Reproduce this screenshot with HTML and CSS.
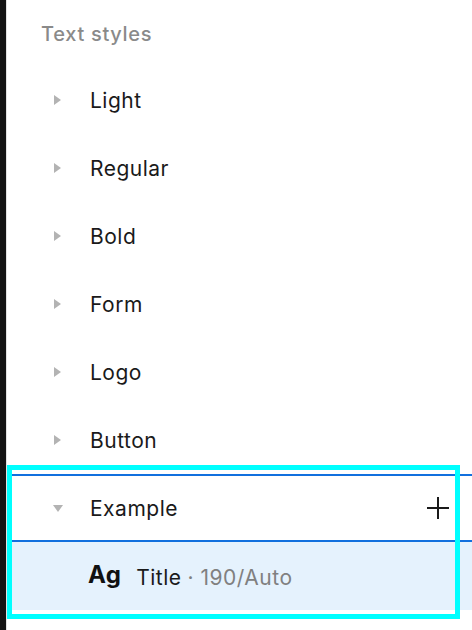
FILE: index.html
```html
<!DOCTYPE html>
<html>
<head>
<meta charset="utf-8">
<link rel="stylesheet" href="styles.css">
</head>
<body>
<div class="app">
  <div class="rail"></div>
  <div class="panel">
    <div class="header">Text styles</div>
    <div class="row"><span class="caret right"></span><span class="name">Light</span></div>
    <div class="row"><span class="caret right"></span><span class="name">Regular</span></div>
    <div class="row"><span class="caret right"></span><span class="name">Bold</span></div>
    <div class="row"><span class="caret right"></span><span class="name">Form</span></div>
    <div class="row"><span class="caret right"></span><span class="name">Logo</span></div>
    <div class="row"><span class="caret right"></span><span class="name">Button</span></div>
    <div class="row group"><span class="caret down"></span><span class="name">Example</span>
      <svg class="plus" width="22" height="22" viewBox="0 0 22 22"><path d="M11 0V22M0 11H22" stroke="#1a1a1a" stroke-width="2"/></svg>
    </div>
    <div class="row style"><span class="ag">Ag</span><span class="sname">Title</span><span class="meta">· 190/Auto</span></div>
    <div class="highlight"></div>
  </div>
</div>
</body>
</html>
```
FILE: styles.css
```css
html, body {
  margin: 0;
  padding: 0;
  background: #fff;
}
body {
  font-family: Inter, "Noto Sans", sans-serif;
  color: #1a1a1a;
}
.app {
  display: flex;
  height: 630px;
  overflow: hidden;
}
.rail {
  width: 6px;
  flex: none;
  background: #131313;
  border-right: 1px solid #e2e2e2;
}
.panel {
  position: relative;
  flex: 1;
}
.header {
  height: 66px;
  box-sizing: border-box;
  padding: 22px 0 0 34px;
  font-size: 20px;
  font-weight: 500;
  letter-spacing: 0.7px;
  color: #8a8a8a;
  line-height: 24px;
}
.row {
  height: 68px;
  box-sizing: border-box;
  display: flex;
  align-items: center;
  padding-left: 47px;
  padding-top: 2px;
  font-size: 21px;
  letter-spacing: 0.5px;
}
.caret {
  width: 0;
  height: 0;
  flex: none;
  margin-top: -2px;
}
.caret.right {
  border-top: 5px solid transparent;
  border-bottom: 5px solid transparent;
  border-left: 7px solid #b3b3b3;
  margin-right: 29px;
}
.caret.down {
  border-left: 5.5px solid transparent;
  border-right: 5.5px solid transparent;
  border-top: 7px solid #b3b3b3;
  margin-left: -1px;
  margin-right: 27px;
}
.name {
  line-height: 24px;
}
.group {
  border-top: 2px solid #1170de;
  border-bottom: 2px solid #1170de;
  padding-right: 23px;
}
.plus {
  margin-left: auto;
  margin-top: -2px;
}
.style {
  background: #e5f2fd;
  padding-left: 81px;
}
.ag {
  font-weight: 700;
  font-size: 24px;
  letter-spacing: 0.3px;
  margin-right: 15px;
  margin-top: -6px;
  color: #111;
}
.sname {
  color: #1a1a1a;
  margin-right: 6px;
}
.meta {
  color: #808080;
}
.highlight {
  position: absolute;
  left: 0;
  top: 465px;
  width: 453px;
  height: 154px;
  box-sizing: border-box;
  border: 5px solid #00ffff;
}
```
